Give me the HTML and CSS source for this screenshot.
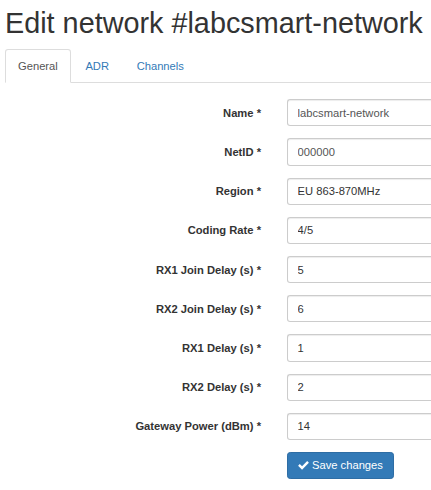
FILE: index.html
```html
<!DOCTYPE html>
<html>
<head>
<meta charset="utf-8">
<link rel="stylesheet" href="styles.css">
</head>
<body>
<div class="page">
  <h1 class="title">Edit network #labcsmart-network</h1>
  <ul class="tabs">
    <li class="tab active"><a>General</a></li>
    <li class="tab"><a>ADR</a></li>
    <li class="tab"><a>Channels</a></li>
  </ul>
  <form class="form">
    <div class="row"><label class="label">Name *</label><input class="input" value="labcsmart-network"></div>
    <div class="row"><label class="label">NetID *</label><input class="input" value="000000"></div>
    <div class="row"><label class="label">Region *</label><input class="input dark" value="EU 863-870MHz"></div>
    <div class="row"><label class="label">Coding Rate *</label><input class="input dark" value="4/5"></div>
    <div class="row"><label class="label">RX1 Join Delay (s) *</label><input class="input dark" value="5"></div>
    <div class="row"><label class="label">RX2 Join Delay (s) *</label><input class="input dark" value="6"></div>
    <div class="row"><label class="label">RX1 Delay (s) *</label><input class="input dark" value="1"></div>
    <div class="row"><label class="label">RX2 Delay (s) *</label><input class="input dark" value="2"></div>
    <div class="row"><label class="label">Gateway Power (dBm) *</label><input class="input dark" value="14"></div>
    <div class="row"><span class="label"></span>
      <button type="button" class="btn"><svg class="ok" viewBox="0 0 12 10" width="11" height="9"><path d="M0 5.2 L1.9 3.3 L4.4 5.8 L10.1 0.1 L12 2 L4.4 9.6 Z" fill="#fff"/></svg>Save changes</button>
    </div>
  </form>
</div>
</body>
</html>
```
FILE: styles.css
```css
html, body {
  margin: 0;
  padding: 0;
  overflow: hidden;
  background: #fff;
}
body {
  font-family: "Liberation Sans", Arial, sans-serif;
  font-size: 11.2px;
  line-height: 16px;
  color: #333;
}
.page {
  padding-left: 5px;
}
.title {
  font-size: 28.8px;
  font-weight: 500;
  line-height: 31.7px;
  margin: 8px 0 9.5px;
  color: #333;
  white-space: nowrap;
}
.tabs {
  list-style: none;
  margin: 0;
  padding: 0;
  display: flex;
  border-bottom: 1px solid #ddd;
}
.tab {
  margin-bottom: -1px;
  margin-right: 1.6px;
}
.tab a {
  display: block;
  padding: 8px 12px;
  line-height: 16px;
  border: 1px solid transparent;
  border-radius: 3.2px 3.2px 0 0;
  color: #337ab7;
}
.tab.active a {
  color: #555;
  background: #fff;
  border-color: #ddd #ddd transparent;
}
.form {
  margin-top: 16px;
}
.row {
  display: grid;
  grid-template-columns: 256px 1fr;
  column-gap: 26px;
  margin-bottom: 12px;
}
.label {
  text-align: right;
  font-weight: bold;
  padding-top: 5.6px;
  line-height: 16px;
  color: #333;
}
.input {
  box-sizing: border-box;
  width: 100%;
  min-width: 0;
  height: 27.2px;
  padding: 4.8px 9.6px;
  font-family: "Liberation Sans", Arial, sans-serif;
  font-size: 11.2px;
  line-height: 16px;
  color: #555;
  border: 1px solid #ccc;
  border-right: 0;
  border-radius: 3.2px 0 0 3.2px;
  box-shadow: inset 0 1px 1px rgba(0,0,0,.075);
  background: #fff;
  outline: none;
  margin: 0;
}
.input.dark {
  color: #333;
}
.btn {
  justify-self: start;
  display: flex;
  align-items: center;
  box-sizing: border-box;
  height: 27.2px;
  padding: 4.8px 9.6px 4.8px 10px;
  font-family: "Liberation Sans", Arial, sans-serif;
  font-size: 11.2px;
  line-height: 16px;
  color: #fff;
  background: #337ab7;
  border: 1px solid #2e6da4;
  border-radius: 3.2px;
  margin: 0;
}
.ok {
  margin-right: 3px;
  margin-top: 1px;
}
```
